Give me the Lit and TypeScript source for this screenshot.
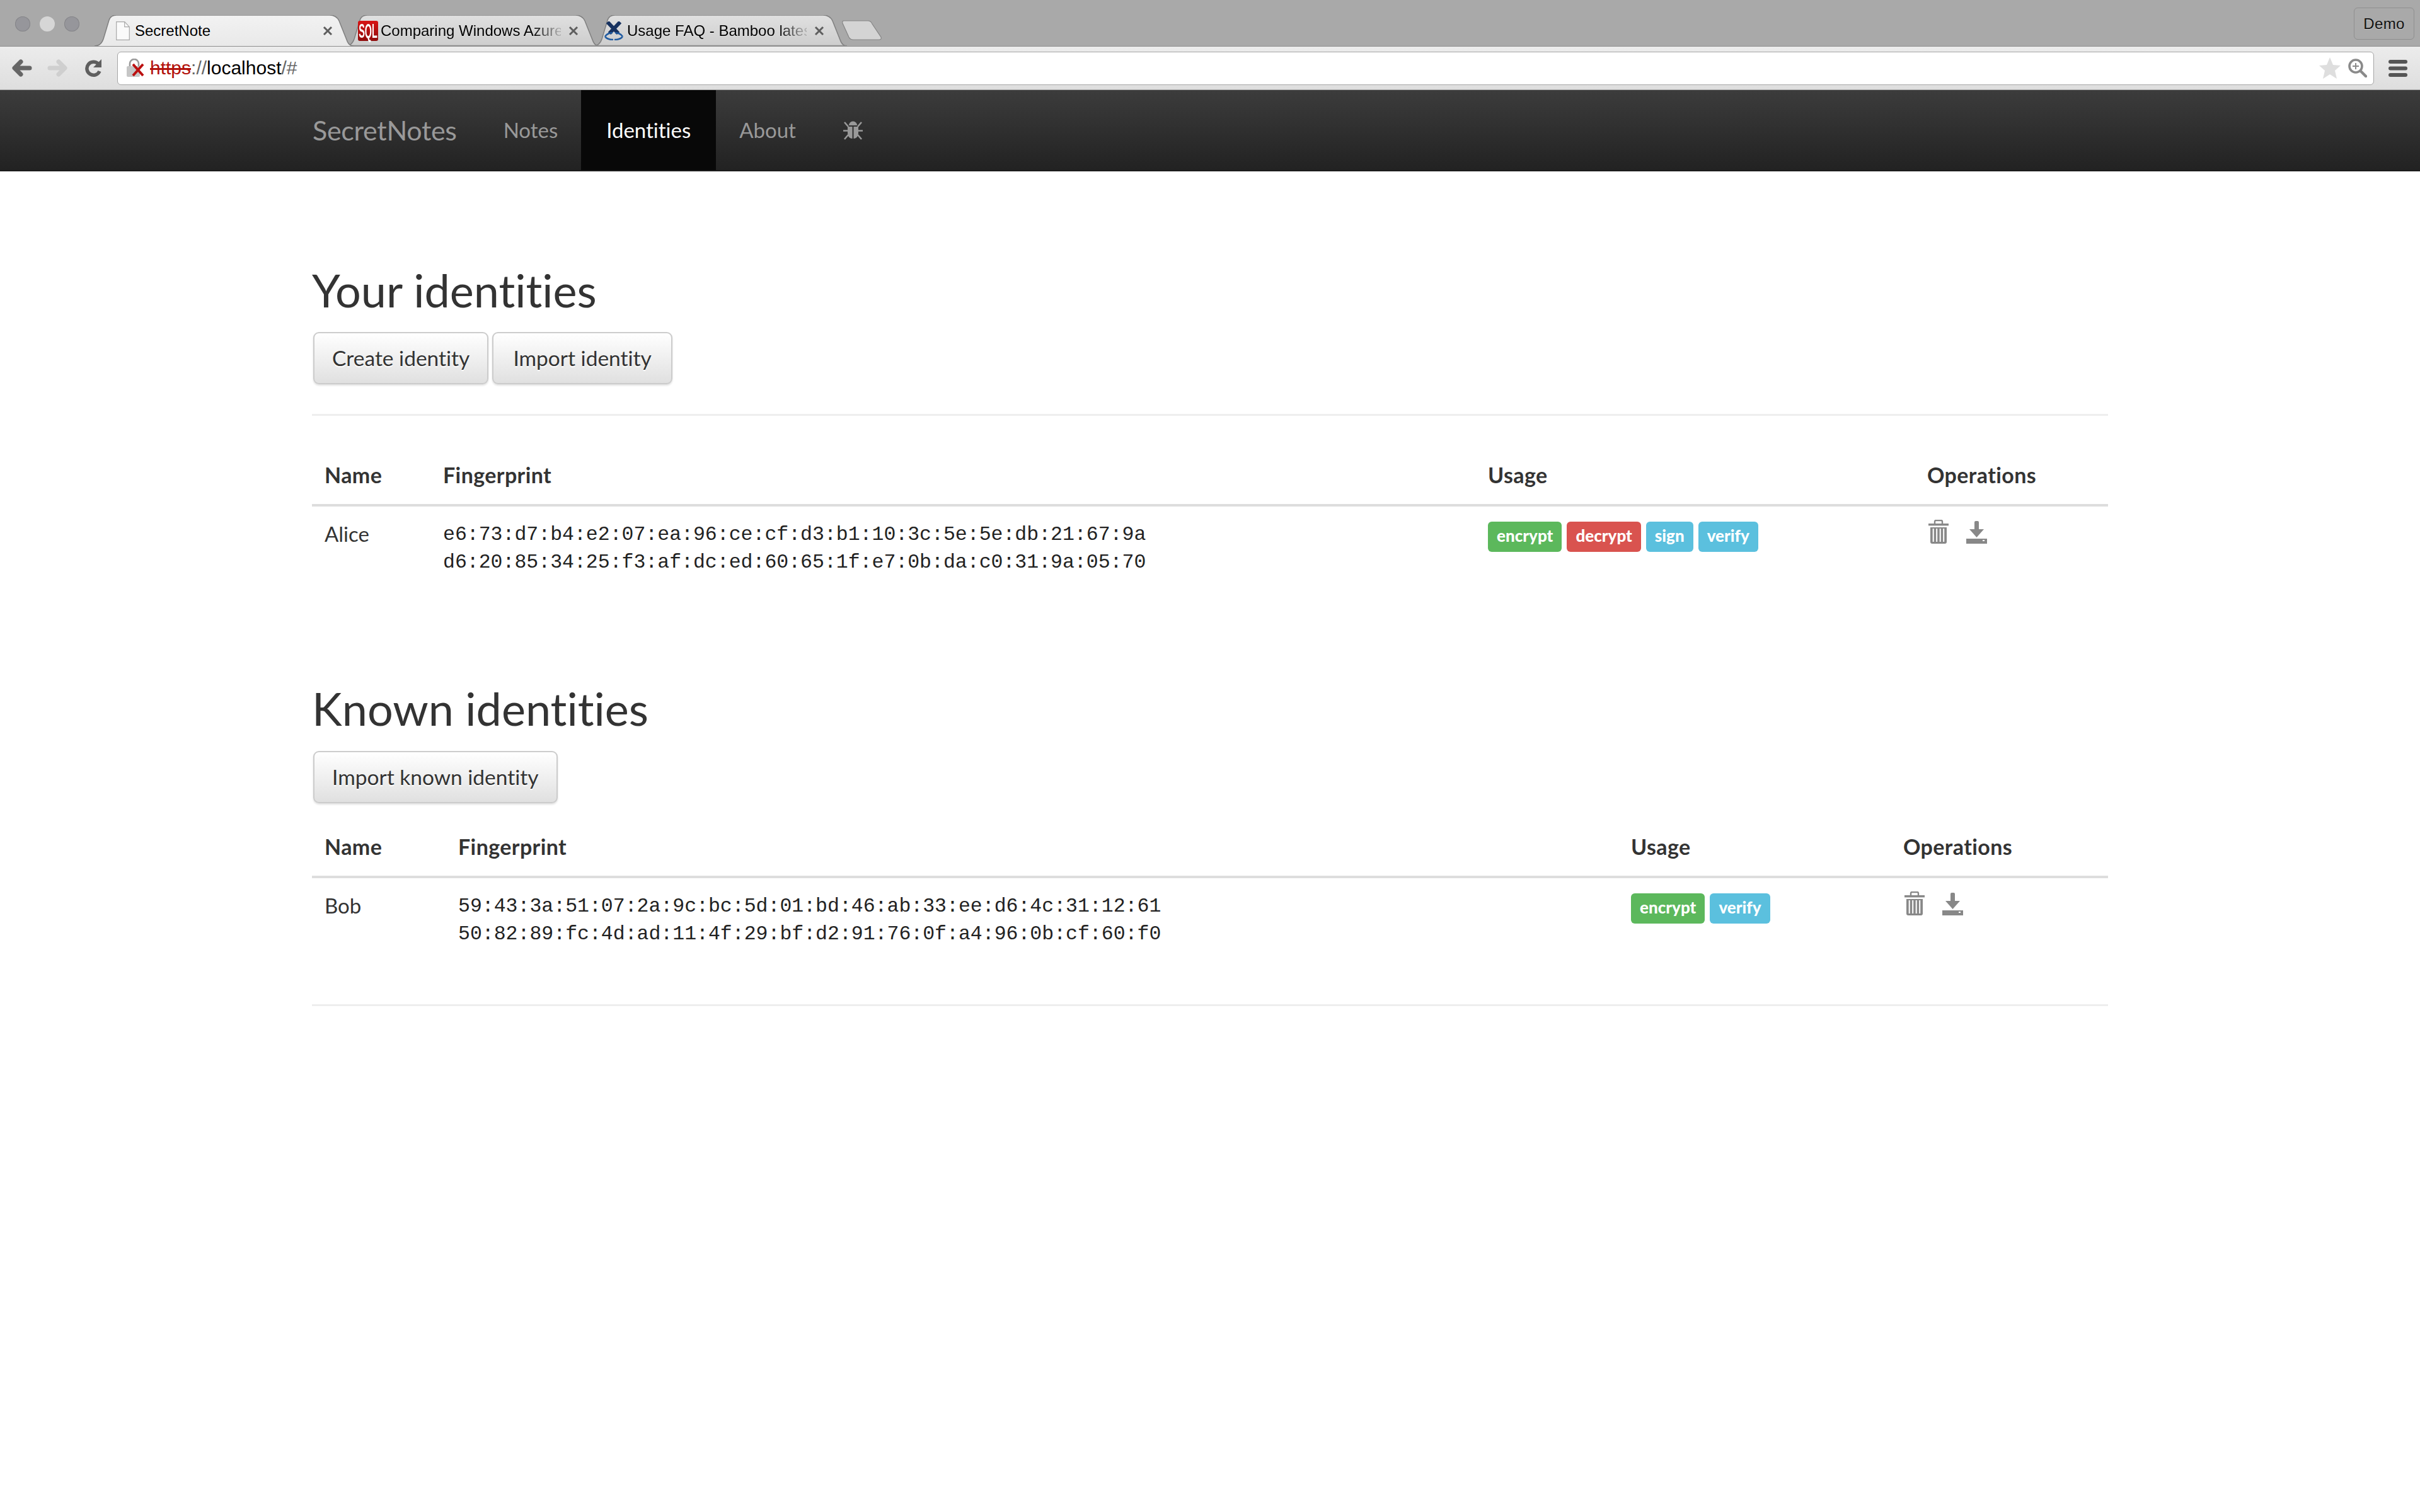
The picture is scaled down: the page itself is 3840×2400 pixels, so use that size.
import { LitElement, html, css, svg } from "lit";
import { customElement } from "lit/decorators.js";

// outline of a chrome tab for a given width, 49px high
function tabPath(w: number, closed = false) {
  const h = 49;
  return `M0,${h} C8,${h} 12,${h - 5} 14,${h - 11} L23,8 C25,2 29,0 35,0 L${w - 38},0 C${w - 30},0 ${w - 26},3 ${w - 23},9 L${w - 11},${h - 10} C${w - 9},${h - 4} ${w - 5},${h} ${w},${h}${closed ? " Z" : ""}`;
}

const trash = html`<svg class="op" width="32" height="38" viewBox="0 0 32 38">
  <path d="M10 6V3q0-2 2-2h8q2 0 2 2v3" fill="none" stroke="#888" stroke-width="2.4" />
  <rect x="0" y="6" width="32" height="3.4" fill="#888" />
  <path d="M3 12h26v23q0 3-3 3H6q-3 0-3-3z" fill="#888" />
  <path d="M6.500 14v21M12 14v21M17.500 14v21M23 14v21" stroke="#fff" stroke-width="2" transform="translate(1.2 0)" />
</svg>`;

const download = html`<svg class="op" width="33" height="36" viewBox="0 0 33 36">
  <path d="M13 2q0-2 2-2h3q2 0 2 2v11h8L16.500 26 5 13h8z" fill="#888" />
  <path d="M0 28h33v8H0z" fill="#888" />
  <rect x="26" y="30" width="3" height="2" fill="#fff" />
</svg>`;

interface Row {
  name: string;
  fp: string[];
  usage: string[];
}

const TONES: Record<string, string> = { encrypt: "green", decrypt: "red", sign: "blue", verify: "blue" };

const YOURS: Row = {
  name: "Alice",
  fp: [
    "e6:73:d7:b4:e2:07:ea:96:ce:cf:d3:b1:10:3c:5e:5e:db:21:67:9a",
    "d6:20:85:34:25:f3:af:dc:ed:60:65:1f:e7:0b:da:c0:31:9a:05:70",
  ],
  usage: ["encrypt", "decrypt", "sign", "verify"],
};

const KNOWN: Row = {
  name: "Bob",
  fp: [
    "59:43:3a:51:07:2a:9c:bc:5d:01:bd:46:ab:33:ee:d6:4c:31:12:61",
    "50:82:89:fc:4d:ad:11:4f:29:bf:d2:91:76:0f:a4:96:0b:cf:60:f0",
  ],
  usage: ["encrypt", "verify"],
};

@customElement("app-root")
export class AppRoot extends LitElement {
  static styles = css`
    :host {
      display: block;
      width: 3840px;
      min-height: 2400px;
      background: #fff;
      color: #333;
      font-family: Lato, "Noto Sans", sans-serif;
      font-variant-ligatures: none;
    }

    /* browser chrome */
    .strip {
      display: flex;
      height: 73px;
      background: #a9a9a9;
      font-family: "Liberation Sans", Arial, sans-serif;
      font-size: 24px;
      color: #000;
    }
    .lights {
      display: flex;
      gap: 15px;
      width: 126px;
      padding: 26px 0 0 24px;
      box-sizing: content-box;
    }
    .lights i {
      width: 24px;
      height: 24px;
      border-radius: 50%;
      background: #96969b;
      box-shadow: inset 0 0 0 1px #858589;
    }
    .lights i.mid {
      background: #d6d6d6;
      box-shadow: none;
    }
    .tab {
      position: relative;
      height: 49px;
      margin-top: 24px;
      display: flex;
      align-items: center;
    }
    .tab svg.shape {
      position: absolute;
      left: 0;
      top: 0;
    }
    .tab.one {
      width: 411px;
      z-index: 3;
    }
    .tab.two {
      width: 403px;
      margin-left: -13px;
      z-index: 2;
    }
    .tab.three {
      width: 403px;
      margin-left: -10px;
      z-index: 1;
    }
    .fav {
      position: relative;
      flex: none;
      display: block;
    }
    .title {
      position: relative;
      flex: none;
      white-space: nowrap;
      text-shadow: 0 1px 0 rgba(255, 255, 255, 0.4);
    }
    .title.fade {
      -webkit-mask-image: linear-gradient(to right, #000 84%, rgba(0, 0, 0, 0.18) 99%);
      mask-image: linear-gradient(to right, #000 84%, rgba(0, 0, 0, 0.18) 99%);
    }
    .one .fav {
      margin-left: 34px;
    }
    .one .title {
      width: 286px;
      margin-left: 8px;
    }
    .two .fav {
      margin-left: 20px;
    }
    .two .title {
      width: 286px;
      margin-left: 4px;
    }
    .three .fav {
      margin-left: 17px;
    }
    .three .title {
      width: 285px;
      margin-left: 5px;
    }
    .close {
      position: relative;
      flex: none;
      margin-left: 11px;
    }
    .sql {
      width: 32px;
      height: 32px;
      border-radius: 3px;
      background: linear-gradient(#d81414, #8f0c0c);
      color: #fff;
      font: bold 32px/33px "Liberation Sans", sans-serif;
      text-align: center;
    }
    .sql span {
      display: block;
      width: 66px;
      margin-left: -17px;
      transform: scaleX(0.45);
      transform-origin: center;
    }
    .newtab {
      width: 64px;
      height: 32px;
      margin: 32px 0 0 -8px;
      display: block;
      flex: none;
    }
    .demo {
      margin: 12px 9px 0 auto;
      width: 96px;
      height: 51px;
      box-sizing: border-box;
      border: 1px solid #8f8f8f;
      border-radius: 6px;
      text-align: center;
      line-height: 50px;
      letter-spacing: 0.4px;
      color: #111;
      text-shadow: 0 1px 0 rgba(255, 255, 255, 0.4);
    }

    .toolbar {
      display: flex;
      align-items: center;
      height: 70px;
      box-sizing: border-box;
      padding: 7px 20px 7px 19px;
      background: linear-gradient(#ececec, #dedede);
      border-top: 1px solid #8e8e8e;
      border-bottom: 1px solid #a8a8a8;
    }
    .toolbar svg {
      display: block;
      flex: none;
    }
    .fwd {
      margin-left: 24px;
    }
    .reload {
      margin-left: 27px;
    }
    .omni {
      flex: 1;
      height: 53px;
      margin: 0 23px 0 24px;
      box-sizing: border-box;
      display: flex;
      align-items: center;
      padding: 0 10px 0 14px;
      background: #fff;
      border: 1px solid #a5a5a5;
      border-radius: 6px;
      font: 30px "Liberation Sans", Arial, sans-serif;
      color: #000;
    }
    .url {
      margin-left: 9px;
      flex: 1;
      white-space: nowrap;
    }
    .url s {
      color: #b3120c;
    }
    .url em {
      font-style: normal;
      color: #666;
    }
    .star {
      margin-right: 12px;
    }

    /* app navbar */
    .navbar {
      display: flex;
      height: 129px;
      padding-left: 496px;
      background: linear-gradient(#3c3c3c, #222);
      border-bottom: 2px solid #1c1c1c;
      box-sizing: border-box;
      color: #999;
      align-items: stretch;
    }
    .brand {
      font-size: 43px;
      line-height: 127px;
      margin-right: 37px;
      letter-spacing: -0.3px;
    }
    .nav {
      font-size: 33px;
      line-height: 127px;
      padding: 0 37px;
    }
    .nav.on {
      width: 214px;
      box-sizing: border-box;
      padding: 0;
      text-align: center;
      color: #fff;
      background: #080808;
    }
    .bug {
      align-self: center;
      margin-left: 38px;
    }

    /* page */
    main {
      width: 2850px;
      margin-left: 495px;
      padding-top: 146px;
    }
    h1 {
      margin: 0;
      font-size: 72px;
      font-weight: 400;
      line-height: 84px;
    }
    .btns {
      display: flex;
      gap: 6px;
      margin: 25px 0 0 2px;
    }
    .btn {
      height: 83px;
      box-sizing: border-box;
      border: 2px solid #ccc;
      border-radius: 9px;
      padding: 0 28px;
      background: linear-gradient(#fff, #e0e0e0);
      box-shadow: 0 2px 3px rgba(0, 0, 0, 0.12);
      font-size: 33.5px;
      line-height: 78px;
      text-shadow: 0 2px 0 #fff;
    }
    .btn + .btn {
      padding: 0 31px;
    }
    hr {
      height: 3px;
      margin: 47px 0 0;
      border: 0;
      background: #eee;
    }
    table {
      width: 100%;
      table-layout: fixed;
      border-collapse: collapse;
    }
    .t1 {
      margin-top: 52px;
    }
    .t2 {
      margin-top: 27px;
    }
    th {
      padding: 20px 20px 24px;
      border-bottom: 4px solid #ddd;
      font-size: 34px;
      font-weight: 700;
      line-height: 44px;
      letter-spacing: 0.4px;
      text-align: left;
    }
    td {
      padding: 21px 20px 0;
      font-size: 33px;
      line-height: 44px;
      vertical-align: top;
    }
    td.fp {
      padding-top: 23px;
      font: 31.5px/44px "Liberation Mono", "Courier New", monospace;
      color: #222;
    }
    .labels {
      display: flex;
      gap: 8px;
      padding-top: 3px;
    }
    .label {
      height: 48px;
      padding: 0 14px;
      border-radius: 6px;
      color: #fff;
      font-size: 26px;
      font-weight: 900;
      line-height: 45px;
    }
    .label.green {
      background: #5cb85c;
    }
    .label.red {
      background: #d9534f;
    }
    .label.blue {
      background: #5bc0de;
    }
    .ops {
      display: flex;
      gap: 28px;
      align-items: flex-end;
      height: 38px;
      padding-left: 2px;
    }
    .op {
      display: block;
    }
    .s2 {
      margin-top: 167px;
    }
    .s2 .btns {
      margin-top: 26px;
    }
    .end {
      margin-top: 89px;
    }
  `;

  renderTable(row: Row, widths: number[], cls: string) {
    return html`<table class=${cls}>
      <colgroup>${widths.map((w) => html`<col style="width:${w}px" />`)}</colgroup>
      <thead>
        <tr>
          <th>Name</th>
          <th>Fingerprint</th>
          <th>Usage</th>
          <th>Operations</th>
        </tr>
      </thead>
      <tbody>
        <tr>
          <td>${row.name}</td>
          <td class="fp">${row.fp.map((l) => html`<div>${l}</div>`)}</td>
          <td>
            <div class="labels">
              ${row.usage.map((u) => html`<span class="label ${TONES[u]}">${u}</span>`)}
            </div>
          </td>
          <td><div class="ops">${trash}${download}</div></td>
        </tr>
      </tbody>
    </table>`;
  }

  renderTab(cls: string, w: number, active: boolean, fav: unknown, title: string, fade: boolean) {
    const id = `g-${cls}`;
    return html`<div class="tab ${cls}">
      <svg class="shape" width=${w} height="49" viewBox="0 0 ${w} 49">
        <defs>
          <linearGradient id=${id} x1="0" y1="0" x2="0" y2="1">
            ${active
              ? svg`<stop offset="0" stop-color="#f2f2f2"/><stop offset="1" stop-color="#e9e9e9"/>`
              : svg`<stop offset="0" stop-color="#e0e0e0"/><stop offset="1" stop-color="#cdcdcd"/>`}
          </linearGradient>
        </defs>
        <path d=${tabPath(w, true)} fill="url(#${id})" />
        <path d=${tabPath(w)} fill="none" stroke="#7f7f7f" stroke-width="1.5" />
        ${active ? "" : svg`<path d="M0 48.500H${w}" stroke="#8e8e8e" stroke-width="1.5"/>`}
      </svg>
      ${fav}
      <span class="title ${fade ? "fade" : ""}">${title}</span>
      <svg class="close" width="18" height="18" viewBox="0 0 18 18">
        <path d="M3 3l12 12M15 3L3 15" stroke="#5e5e5e" stroke-width="3" />
      </svg>
    </div>`;
  }

  render() {
    const pageIcon = html`<svg class="fav" width="22" height="30" viewBox="0 0 22 30">
      <path d="M.7.7h13l7.600 8v20.600H.7z" fill="#fafafa" stroke="#a8a8a8" stroke-width="1.2" />
      <path d="M13.700.7v8h7.600" fill="none" stroke="#a8a8a8" stroke-width="1.2" />
    </svg>`;
    const sqlIcon = html`<div class="fav sql"><span>SQL</span></div>`;
    const toolsIcon = html`<svg class="fav" width="32" height="30" viewBox="0 0 32 30">
      <path d="M6 1l17 18M26 1L9 19" stroke="#16315f" stroke-width="6" />
      <path d="M2 24c2-4 8-6 12-6M30 24c-2-4-8-6-12-6M2 24c3 4 9 5 13 5M30 24c-3 4-9 5-13 5" fill="none" stroke="#1f5aa0" stroke-width="2.6" />
    </svg>`;

    return html`
      <div class="strip">
        <div class="lights"><i></i><i class="mid"></i><i></i></div>
        ${this.renderTab("one", 411, true, pageIcon, "SecretNote", false)}
        ${this.renderTab("two", 403, false, sqlIcon, "Comparing Windows Azure", true)}
        ${this.renderTab("three", 403, false, toolsIcon, "Usage FAQ - Bamboo lates", true)}
        <svg class="newtab" viewBox="0 0 64 32">
          <path d="M3 1h38q5 0 7 5l14 21q1 4-3 4H18q-5 0-7-4L1 5q-1-4 2-4z" fill="#d4d4d4" stroke="#858585" stroke-width="1.2" />
        </svg>
        <div class="demo">Demo</div>
      </div>
      <div class="toolbar">
        <svg width="32" height="28" viewBox="0 0 32 28">
          <path d="M28 14H6M14 4L4 14l10 10" fill="none" stroke="#666" stroke-width="7" stroke-linecap="round" stroke-linejoin="round" />
        </svg>
        <svg class="fwd" width="32" height="28" viewBox="0 0 32 28">
          <path d="M4 14h22M18 4l10 10-10 10" fill="none" stroke="#cfcfcf" stroke-width="7" stroke-linecap="round" stroke-linejoin="round" />
        </svg>
        <svg class="reload" width="28" height="30" viewBox="0 0 28 30">
          <path d="M22 8.500A10.500 10.500 0 1 0 24 20" fill="none" stroke="#5f5f5f" stroke-width="5.500" />
          <path d="M27 1v13H14z" fill="#5f5f5f" />
        </svg>
        <div class="omni">
          <svg width="28" height="30" viewBox="0 0 28 30">
            <path d="M5 14V8a7 7 0 0 1 14 0v6" fill="none" stroke="#9a9a9a" stroke-width="2.600" />
            <rect x="0" y="12" width="21" height="17" rx="2" fill="#c6c6c6" />
            <path d="M10 9l16 18M26 9L10 27" stroke="#bb1010" stroke-width="4" />
          </svg>
          <span class="url"><s>https</s><em>://</em>localhost<em>/#</em></span>
          <svg class="star" width="34" height="34" viewBox="0 0 34 34">
            <path d="M17 0l5 12 12 1-9 8 3 13-11-7-11 7 3-13-9-8 12-1z" fill="#dedede" />
          </svg>
          <svg width="30" height="30" viewBox="0 0 30 30">
            <circle cx="12" cy="12" r="10" fill="#fff" stroke="#8a8a8a" stroke-width="3.600" />
            <path d="M20 20l8 8" stroke="#8a8a8a" stroke-width="4.500" stroke-linecap="round" />
            <path d="M7 12h10M12 7v10" stroke="#8a8a8a" stroke-width="2" />
          </svg>
        </div>
        <svg width="30" height="27" viewBox="0 0 30 27">
          <rect y="0" width="30" height="6" rx="3" fill="#555" />
          <rect y="10.500" width="30" height="6" rx="3" fill="#555" />
          <rect y="21" width="30" height="6" rx="3" fill="#555" />
        </svg>
      </div>
      <div class="navbar">
        <div class="brand">SecretNotes</div>
        <div class="nav">Notes</div>
        <div class="nav on">Identities</div>
        <div class="nav">About</div>
        <svg class="bug" width="31" height="31" viewBox="0 0 31 31">
          <path d="M9 8a6.500 6.500 0 0 1 13 0z" fill="#999" />
          <path d="M7 10h7.500v19C10 29 7 25 7 20zM16.500 10H24v10c0 5-3 9-7.500 9z" fill="#999" />
          <path d="M0 16.500h7M24 16.500h7M2 3l6 7M29 3l-6 7M2 30l6-7M29 30l-6-7" stroke="#999" stroke-width="2.600" />
        </svg>
      </div>
      <main>
        <section>
          <h1>Your identities</h1>
          <div class="btns">
            <div class="btn">Create identity</div>
            <div class="btn">Import identity</div>
          </div>
          <hr />
          ${this.renderTable(YOURS, [188, 1658, 697, 307], "t1")}
        </section>
        <section class="s2">
          <h1>Known identities</h1>
          <div class="btns"><div class="btn">Import known identity</div></div>
          ${this.renderTable(KNOWN, [212, 1861, 432, 345], "t2")}
          <hr class="end" />
        </section>
      </main>
    `;
  }
}
